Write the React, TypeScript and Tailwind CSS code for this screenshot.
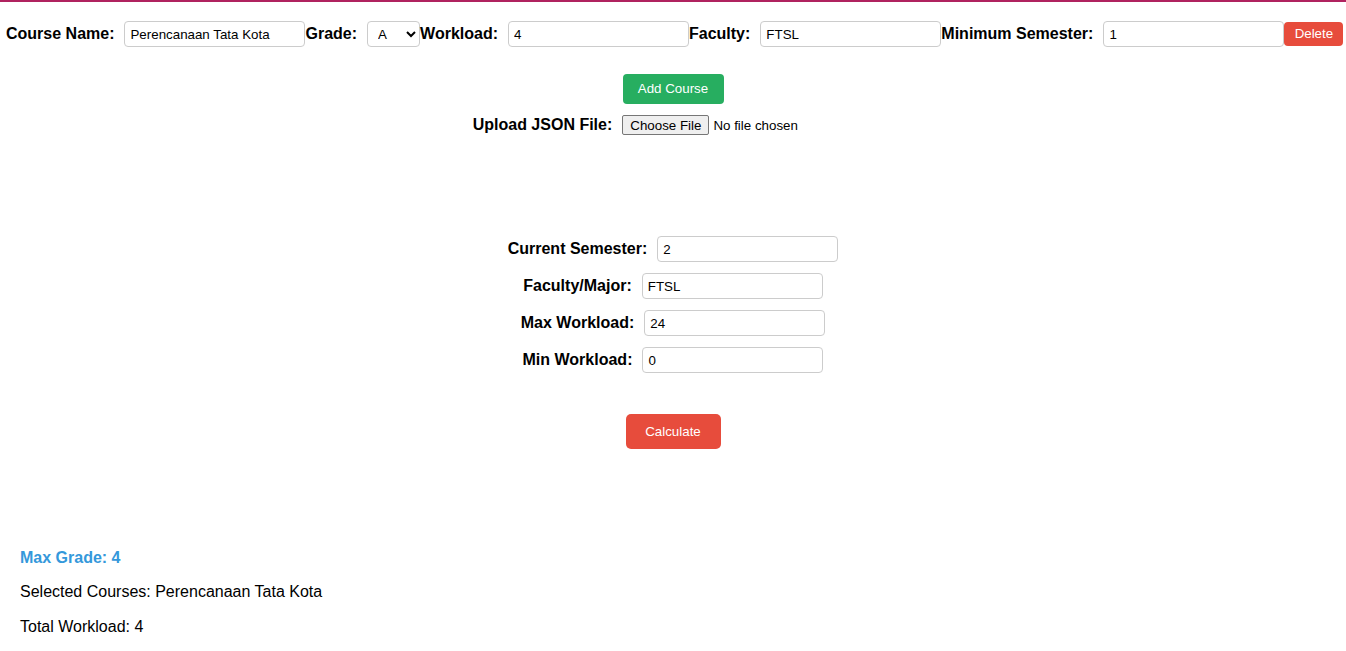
import { useState } from 'react';

type Course = {
  name: string;
  grade: string;
  workload: string;
  faculty: string;
  minSemester: string;
};

const inputClass =
  'h-[26px] w-[181px] rounded-[4px] border border-[#cccccc] bg-white px-[5px] text-[13.33px] text-black outline-none';

function Label({ children }: { children: React.ReactNode }) {
  return <label className="mr-[10px] text-[16px] font-bold text-black">{children}</label>;
}

export default function App() {
  const [courses, setCourses] = useState<Course[]>([
    { name: 'Perencanaan Tata Kota', grade: 'A', workload: '4', faculty: 'FTSL', minSemester: '1' },
  ]);
  const [semester, setSemester] = useState('2');
  const [major, setMajor] = useState('FTSL');
  const [maxLoad, setMaxLoad] = useState('24');
  const [minLoad, setMinLoad] = useState('0');

  const update = (i: number, key: keyof Course, value: string) => {
    setCourses(courses.map((c, idx) => (idx === i ? { ...c, [key]: value } : c)));
  };

  const addCourse = () => {
    setCourses([...courses, { name: '', grade: 'A', workload: '', faculty: '', minSemester: '' }]);
  };

  return (
    <div className="min-h-screen bg-white font-['Liberation_Sans',Arial,sans-serif] text-black">
      <div className="h-[2px] bg-[#b0235f]" />

      <div className="pt-[19px]">
        {courses.map((c, i) => (
          <div key={i} className="mb-[4px] flex items-center pl-[6px]">
            <Label>Course Name:</Label>
            <input className={inputClass} value={c.name} onChange={(e) => update(i, 'name', e.target.value)} />
            <Label>Grade:</Label>
            <select
              className="h-[26px] w-[53px] rounded-[4px] border border-[#cccccc] bg-white pl-[6px] text-[13.33px] text-black outline-none"
              value={c.grade}
              onChange={(e) => update(i, 'grade', e.target.value)}
            >
              <option>A</option>
              <option>AB</option>
              <option>B</option>
              <option>BC</option>
              <option>C</option>
              <option>D</option>
              <option>E</option>
            </select>
            <Label>Workload:</Label>
            <input className={inputClass} value={c.workload} onChange={(e) => update(i, 'workload', e.target.value)} />
            <Label>Faculty:</Label>
            <input className={inputClass} value={c.faculty} onChange={(e) => update(i, 'faculty', e.target.value)} />
            <Label>Minimum Semester:</Label>
            <input
              className={inputClass}
              value={c.minSemester}
              onChange={(e) => update(i, 'minSemester', e.target.value)}
            />
            <button
              onClick={() => setCourses(courses.filter((_, idx) => idx !== i))}
              className="h-[24px] w-[59px] rounded-[4px] bg-[#e74c3c] text-[13.33px] text-white"
            >
              Delete
            </button>
          </div>
        ))}
      </div>

      <div className="mt-[27px] flex justify-center">
        <button onClick={addCourse} className="h-[30px] w-[101px] rounded-[4px] bg-[#27ae60] text-[13.33px] text-white">
          Add Course
        </button>
      </div>

      <div className="mt-[9px] flex items-center justify-center">
        <Label>Upload JSON File:</Label>
        <input
          type="file"
          accept=".json"
          className="w-[251px] text-[13.33px] file:mr-[4px] file:h-[20px] file:rounded-[2px] file:border file:border-[#767676] file:bg-[#efefef] file:px-[7px] file:text-[13.33px] file:text-black"
        />
      </div>

      <div className="mt-[99px] flex flex-col items-center gap-[11px]">
        <div className="flex items-center">
          <Label>Current Semester:</Label>
          <input className={inputClass} value={semester} onChange={(e) => setSemester(e.target.value)} />
        </div>
        <div className="flex items-center">
          <Label>Faculty/Major:</Label>
          <input className={inputClass} value={major} onChange={(e) => setMajor(e.target.value)} />
        </div>
        <div className="flex items-center">
          <Label>Max Workload:</Label>
          <input className={inputClass} value={maxLoad} onChange={(e) => setMaxLoad(e.target.value)} />
        </div>
        <div className="flex items-center">
          <Label>Min Workload:</Label>
          <input className={inputClass} value={minLoad} onChange={(e) => setMinLoad(e.target.value)} />
        </div>
      </div>

      <div className="mt-[41px] flex justify-center">
        <button className="h-[35px] w-[95px] rounded-[5px] bg-[#e74c3c] text-[13.33px] text-white">Calculate</button>
      </div>

      <div className="mt-[100px] flex flex-col gap-[16px] px-[20px] text-[16px] leading-[18.4px]">
        <p className="font-bold text-[#3498db]">Max Grade: 4</p>
        <p>Selected Courses: {courses.map((c) => c.name).join(', ')}</p>
        <p>Total Workload: {courses.reduce((s, c) => s + (Number(c.workload) || 0), 0)}</p>
      </div>
    </div>
  );
}
